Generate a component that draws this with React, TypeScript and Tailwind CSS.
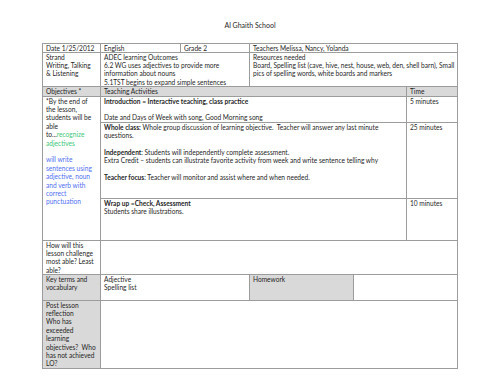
import React from "react";

const font = { fontFamily: 'Lato, "Liberation Sans", sans-serif' };

function Cell({ className = "", children }: { className?: string; children?: React.ReactNode }) {
  return (
    <div className={`border-b border-r border-[#9c9c9c] px-[3px] leading-[8.4px] whitespace-nowrap ${className}`}>
      {children}
    </div>
  );
}

export default function App() {
  return (
    <div className="flex h-[386px] w-[500px] flex-col bg-white text-[6.6px] text-[#1f1f1f]" style={font}>
      <div className="mt-[21px] text-center text-[7px] leading-[8.6px]">Al Ghaith School</div>

      <div className="ml-[42px] mt-[13px] grid w-[416px] grid-cols-[58px_80px_69px_104px_53px_51px] grid-rows-[9px_34px_10px_26px_76px_42px_34px_26px_68px] border-l border-t border-[#9c9c9c]">
        {/* header info */}
        <Cell>Date 1/25/2012</Cell>
        <Cell>English</Cell>
        <Cell>Grade 2</Cell>
        <Cell className="col-span-3">Teachers Melissa, Nancy, Yolanda</Cell>

        <Cell>
          Strand
          <br />
          Writing, Talking
          <br />
          &amp; Listening
        </Cell>
        <Cell className="col-span-2">
          ADEC learning Outcomes
          <br />
          6.2 WG uses adjectives to provide more
          <br />
          information about nouns
          <br />
          5.1TST begins to expand simple sentences
        </Cell>
        <Cell className="col-span-3">
          Resources needed
          <br />
          Board, Spelling list (cave, hive, nest, house, web, den, shell barn), Small
          <br />
          pics of spelling words, white boards and markers
        </Cell>

        {/* teaching activities */}
        <Cell className="bg-[#d9d9d9]">Objectives *</Cell>
        <Cell className="col-span-4 bg-[#d9d9d9]">Teaching Activities</Cell>
        <Cell className="bg-[#d9d9d9]">Time</Cell>

        <Cell className="row-span-3">
          *By the end of
          <br />
          the lesson,
          <br />
          students will be
          <br />
          able
          <br />
          to...<span className="text-[#3cc878]">recognize</span>
          <br />
          <span className="text-[#3cc878]">adjectives</span>
          <br />
          <br />
          <span className="text-[#4f6ff2]">
            will write
            <br />
            sentences using
            <br />
            adjective, noun
            <br />
            and verb with
            <br />
            correct
            <br />
            punctuation
          </span>
        </Cell>
        <Cell className="col-span-4">
          <b>Introduction = Interactive teaching, class practice</b>
          <br />
          <br />
          Date and Days of Week with song, Good Morning song
        </Cell>
        <Cell>5 minutes</Cell>

        <Cell className="col-span-4">
          <b>Whole class:</b> Whole group discussion of learning objective.&nbsp; Teacher will answer any last minute
          <br />
          questions.
          <br />
          <br />
          <b>Independent</b>: Students will independently complete assessment.
          <br />
          Extra Credit – students can illustrate favorite activity from week and write sentence telling why
          <br />
          <br />
          <b>Teacher focus</b>: Teacher will monitor and assist where and when needed.
        </Cell>
        <Cell>25 minutes</Cell>

        <Cell className="col-span-4">
          <b>Wrap up =Check, Assessment</b>
          <br />
          Students share illustrations.
        </Cell>
        <Cell>10 minutes</Cell>

        {/* lower section */}
        <Cell>
          How will this
          <br />
          lesson challenge
          <br />
          most able? Least
          <br />
          able?
        </Cell>
        <Cell className="col-span-5" />

        <Cell className="bg-[#d9d9d9]">
          Key terms and
          <br />
          vocabulary
        </Cell>
        <Cell className="col-span-2">
          Adjective
          <br />
          Spelling list
        </Cell>
        <Cell className="bg-[#d9d9d9]">Homework</Cell>
        <Cell className="col-span-2" />

        <Cell className="bg-[#d9d9d9]">
          Post lesson
          <br />
          reflection
          <br />
          Who has
          <br />
          exceeded
          <br />
          learning
          <br />
          objectives?&nbsp; Who
          <br />
          has not achieved
          <br />
          LO?
        </Cell>
        <Cell className="col-span-5" />
      </div>
    </div>
  );
}
